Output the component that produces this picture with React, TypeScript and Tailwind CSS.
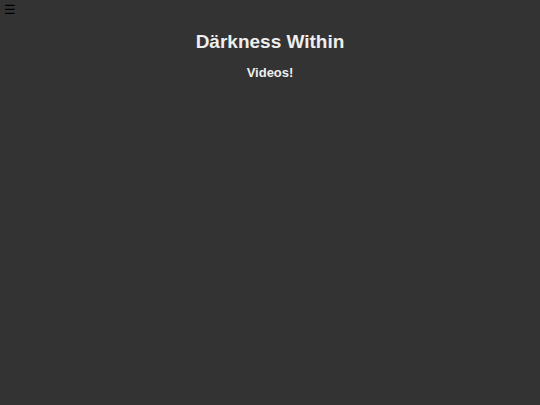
export default function App() {
  return (
    <div className="min-h-screen bg-[#333333] font-['Liberation_Sans',Arial,sans-serif]">
      <div className="h-[20px] px-[4px] text-[13px] leading-[20px] text-black">☰</div>
      <div className="flex flex-col items-center text-[#eeeeee]">
        <h1 className="mt-[10px] text-[19px] font-bold leading-[24px]">Därkness Within</h1>
        <h2 className="mt-[11px] text-[13px] font-bold leading-[16px]">Videos!</h2>
      </div>
    </div>
  )
}
